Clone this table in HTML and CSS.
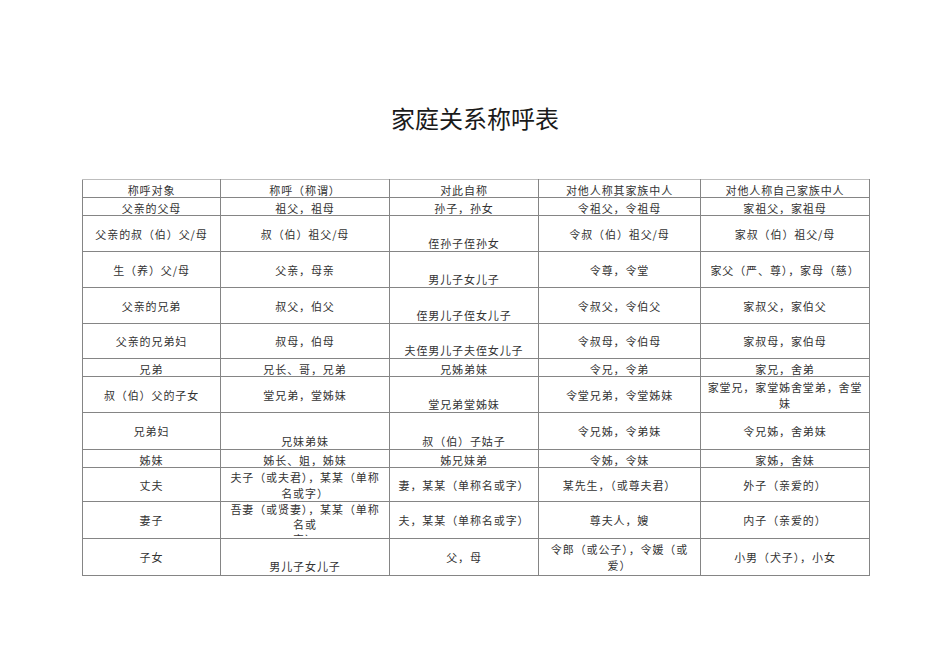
FILE: index.html
```html
<!DOCTYPE html>
<html lang="zh">
<head>
<meta charset="utf-8">
<title>家庭关系称呼表</title>
<link rel="stylesheet" href="styles.css">
</head>
<body>
<div class="page">
  <h1 class="title">家庭关系称呼表</h1>
  <table class="kin">
    <colgroup>
      <col class="c1"><col class="c2"><col class="c3"><col class="c4"><col class="c5">
    </colgroup>
    <tr class="h18">
      <td class="lo">称呼对象</td><td class="lo">称呼（称谓）</td><td class="lo">对此自称</td><td class="lo">对他人称其家族中人</td><td class="lo">对他人称自己家族中人</td>
    </tr>
    <tr class="h18">
      <td class="lo">父亲的父母</td><td class="lo">祖父，祖母</td><td class="lo">孙子，孙女</td><td class="lo">令祖父，令祖母</td><td class="lo">家祖父，家祖母</td>
    </tr>
    <tr class="h36">
      <td>父亲的叔（伯）父/母</td><td>叔（伯）祖父/母</td><td class="lo2">侄孙子侄孙女</td><td>令叔（伯）祖父/母</td><td>家叔（伯）祖父/母</td>
    </tr>
    <tr class="h36">
      <td>生（养）父/母</td><td>父亲，母亲</td><td class="lo2">男儿子女儿子</td><td>令尊，令堂</td><td>家父（严、尊），家母（慈）</td>
    </tr>
    <tr class="h36">
      <td>父亲的兄弟</td><td>叔父，伯父</td><td class="lo2">侄男儿子侄女儿子</td><td>令叔父，令伯父</td><td>家叔父，家伯父</td>
    </tr>
    <tr class="h35">
      <td>父亲的兄弟妇</td><td>叔母，伯母</td><td class="lo2">夫侄男儿子夫侄女儿子</td><td>令叔母，令伯母</td><td>家叔母，家伯母</td>
    </tr>
    <tr class="h18">
      <td class="lo">兄弟</td><td class="lo">兄长、哥，兄弟</td><td class="lo">兄姊弟妹</td><td class="lo">令兄，令弟</td><td class="lo">家兄，舍弟</td>
    </tr>
    <tr class="h36">
      <td>叔（伯）父的子女</td><td>堂兄弟，堂姊妹</td><td class="lo2">堂兄弟堂姊妹</td><td>令堂兄弟，令堂姊妹</td><td class="two">家堂兄，家堂姊舍堂弟，舍堂<br>妹</td>
    </tr>
    <tr class="h37">
      <td>兄弟妇</td><td class="lo2">兄妹弟妹</td><td class="lo2">叔（伯）子姑子</td><td>令兄姊，令弟妹</td><td>令兄姊，舍弟妹</td>
    </tr>
    <tr class="h18">
      <td class="lo">姊妹</td><td class="lo">姊长、姐，姊妹</td><td class="lo">姊兄妹弟</td><td class="lo">令姊，令妹</td><td class="lo">家姊，舍妹</td>
    </tr>
    <tr class="h34">
      <td>丈夫</td><td class="two">夫子（或夫君），某某（单称<br>名或字）</td><td>妻，某某（单称名或字）</td><td>某先生，（或尊夫君）</td><td>外子（亲爱的）</td>
    </tr>
    <tr class="h37">
      <td>妻子</td><td class="clip"><div class="clipbox">吾妻（或贤妻），某某（单称<br>名或<br>字）</div></td><td>夫，某某（单称名或字）</td><td>尊夫人，嫂</td><td>内子（亲爱的）</td>
    </tr>
    <tr class="h37">
      <td>子女</td><td class="lo3">男儿子女儿子</td><td>父，母</td><td class="two">令郎（或公子），令媛（或<br>爱）</td><td>小男（犬子），小女</td>
    </tr>
  </table>
</div>
</body>
</html>
```

FILE: styles.css
```css
html, body {
  margin: 0;
  padding: 0;
  background: #ffffff;
}

.page {
  width: 950px;
  padding-top: 103px;
  font-family: "Noto Sans CJK SC", "Noto Sans", sans-serif;
  color: #222;
}

.title {
  margin: 0;
  font-size: 24px;
  line-height: 30px;
  font-weight: normal;
  text-align: center;
  color: #1a1a1a;
}

.kin {
  margin: 46px 0 0 82px;
  border-collapse: collapse;
  table-layout: fixed;
  width: 787px;
  font-size: 11px;
  letter-spacing: 0.9px;
  color: #333;
}

.c1 { width: 138px; }
.c2 { width: 169px; }
.c3 { width: 149px; }
.c4 { width: 162px; }
.c5 { width: 169px; }

.kin td {
  border: 1px solid #858585;
  padding: 0 2px;
  text-align: center;
  vertical-align: middle;
  line-height: 14px;
  white-space: nowrap;
  overflow: hidden;
}

.kin tr:first-child td {
  border-top-color: #bdbdbd;
}

.h18 { height: 18px; }
.h34 { height: 34px; }
.h35 { height: 35px; }
.h36 { height: 36px; }
.h37 { height: 37px; }
.h38 { height: 38px; }

.kin td.lo {
  vertical-align: bottom;
  padding-bottom: 0;
}

.kin td.lo2 {
  vertical-align: bottom;
  padding-bottom: 1px;
}

.kin td.lo3 {
  vertical-align: bottom;
  padding-bottom: 2px;
}

.kin td.two {
  line-height: 16px;
}

.kin td.clip {
  vertical-align: top;
  padding: 0 2px;
}

.clipbox {
  height: 34px;
  overflow: hidden;
  line-height: 15px;
  padding-top: 0;
}
```
